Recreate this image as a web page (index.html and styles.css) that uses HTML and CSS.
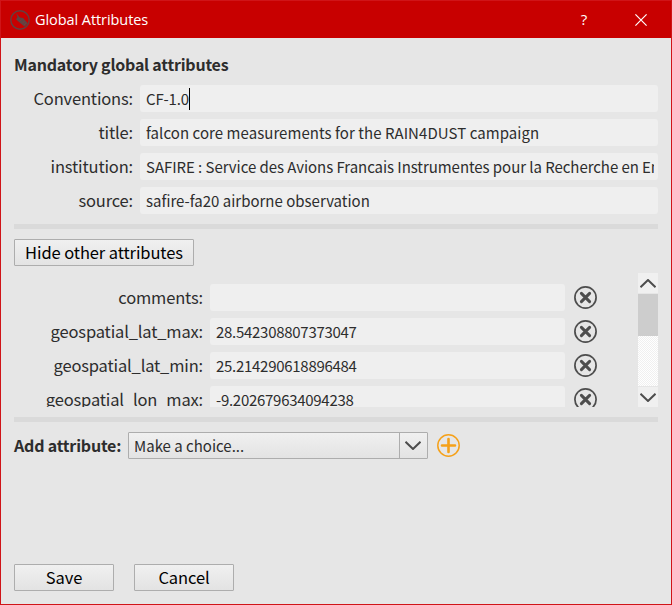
FILE: index.html
```html
<!DOCTYPE html>
<html lang="en">
<head>
<meta charset="utf-8">
<title>Global Attributes</title>
<link rel="stylesheet" href="styles.css">
</head>
<body>
<svg class="defs" width="0" height="0" aria-hidden="true">
  <symbol id="remove" viewBox="0 0 24 24"><circle cx="12.500" cy="12.500" r="10.600" fill="none" stroke="#4d4d4d" stroke-width="1.700"/><path d="M8.400 8.400l8.200 8.200M16.600 8.400l-8.200 8.200" stroke="#4d4d4d" stroke-width="3" stroke-linecap="round"/></symbol>
</svg>
<div class="window">
  <header class="titlebar">
    <svg class="logo" width="20" height="20" viewBox="0 0 20 20"><circle cx="10" cy="10" r="9.2" fill="none" stroke="#63403f" stroke-width="1.4"/><path d="M6.3 3.200l3.500 4.300 3.200.5 4.800 5.200-3.300 3.300-5.500-4.500-3-2.800 1.500-2z" fill="#5c4544"/><path d="M9.500 11.500l2-2M12 13.500l2.500-2.500M14 15l2-2" stroke="#963030" stroke-width=".6"/></svg>
    <h1>Global Attributes</h1>
    <span class="help">?</span>
    <svg class="close" width="12" height="12" viewBox="0 0 12 12"><path d="M.4.4l11.2 11.2M11.6.4L.4 11.6" stroke="#fff" stroke-width="1.2"/></svg>
  </header>
  <main>
    <h2>Mandatory global attributes</h2>
    <div class="form">
      <div class="row"><label>Conventions:</label><div class="field"><span class="text code">CF-1.0</span><i class="caret"></i></div></div>
      <div class="row"><label>title:</label><div class="field"><span class="text wide">falcon core measurements for the RAIN4DUST campaign</span></div></div>
      <div class="row"><label>institution:</label><div class="field"><span class="text long">SAFIRE : Service des Avions Francais Instrumentes pour la Recherche en Environnement</span></div></div>
      <div class="row"><label>source:</label><div class="field"><span class="text">safire-fa20 airborne observation</span></div></div>
    </div>
    <div class="separator"></div>
    <button class="toggle">Hide other attributes</button>
    <section class="scroll">
      <div class="list">
        <div class="row"><label>comments:</label><div class="field"></div><svg class="icon"><use href="#remove"/></svg></div>
        <div class="row"><label>geospatial_lat_max:</label><div class="field"><span class="text number">28.542308807373047</span></div><svg class="icon"><use href="#remove"/></svg></div>
        <div class="row"><label>geospatial_lat_min:</label><div class="field"><span class="text number">25.214290618896484</span></div><svg class="icon"><use href="#remove"/></svg></div>
        <div class="row"><label>geospatial_lon_max:</label><div class="field"><span class="text number">-9.202679634094238</span></div><svg class="icon"><use href="#remove"/></svg></div>
      </div>
      <div class="scrollbar">
        <div class="arrow"><svg width="16" height="9" viewBox="0 0 16 9"><path d="M.5 8.2l7.500-7.200 7.500 7.200"/></svg></div>
        <div class="track"><div class="thumb"></div></div>
        <div class="arrow"><svg width="16" height="9" viewBox="0 0 16 9"><path d="M.5 .8l7.500 7.200 7.500-7.200"/></svg></div>
      </div>
    </section>
    <div class="separator"></div>
    <div class="add">
      <b>Add attribute:</b>
      <div class="combo"><span>Make a choice...</span><div class="drop"><svg width="16" height="9" viewBox="0 0 16 9"><path d="M.5 .8l7.500 7.200 7.500-7.200"/></svg></div></div>
      <svg class="plus" width="24" height="24" viewBox="0 0 24 24"><circle cx="12.500" cy="11.500" r="10.700" fill="none" stroke="#f5a11a" stroke-width="1.5"/><path d="M12.500 5v13M6 11.500h13" stroke="#f5a11a" stroke-width="2.600" stroke-linecap="round"/></svg>
    </div>
    <footer><button>Save</button><button>Cancel</button></footer>
  </main>
</div>
</body>
</html>
```
FILE: styles.css
```css
* { box-sizing: border-box; }
body { margin: 0; font-family: "Noto Sans CJK SC", "Noto Sans", sans-serif; color: #2d2d2d; }
.defs { position: absolute; }
.window { width: 672px; height: 605px; border: 1px solid #d01418; background: #e6e6e6; display: flex; flex-direction: column; overflow: hidden; }
.titlebar { height: 37px; flex: none; background: #c80000; display: flex; align-items: center; padding-left: 9px; color: #fff; font-family: "Open Sans", sans-serif; }
.titlebar h1 { margin: 0 0 0 5px; font-size: 14.500px; font-weight: 400; line-height: 20px; letter-spacing: -.07px; }
.help { margin: -2px 0 0 auto; width: 10px; text-align: center; font-size: 15px; line-height: 20px; }
.close { margin: 0 24px 0 46px; }
main { flex: 1; padding: 14px 13px 13px; display: flex; flex-direction: column; }
h2 { margin: 0 0 7px; height: 26px; line-height: 25px; font-size: 16px; letter-spacing: -.22px; white-space: nowrap; }
h2, b { font-weight: 700; }
.form, .list { display: flex; flex-direction: column; gap: 7px; }
.row { display: flex; height: 27px; flex: none; }
label { width: 119px; margin-right: 7px; text-align: right; font-size: 16.500px; letter-spacing: -.16px; line-height: 27px; white-space: nowrap; flex: none; }
.field { flex: 1; min-width: 0; height: 27px; background: #efefef; border-radius: 3px; padding: 0 4px 0 6px; display: flex; align-items: center; }
.text { font-size: 15px; line-height: 27px; white-space: nowrap; overflow: hidden; }
.code { letter-spacing: -.15px; }
.wide { letter-spacing: .06px; }
.long { letter-spacing: -.055px; }
.number { letter-spacing: -.28px; }
.caret { width: 1px; height: 22px; background: #000; flex: none; }
.separator { height: 5px; margin-top: 10px; background: #dadada; flex: none; }
button { font-family: inherit; font-size: 16.500px; letter-spacing: -.1px; line-height: 25px; height: 27px; padding: 0; color: #000; border: 1px solid #adadad; border-radius: 1px; background: linear-gradient(#f0f0f0, #e3e3e3); width: 100px; white-space: nowrap; }
.toggle { width: 180px; margin-top: 10px; flex: none; }
.scroll { height: 134px; margin-top: 7px; display: flex; justify-content: space-between; overflow: hidden; flex: none; }
.list { width: 583px; padding-top: 11px; }
.list label { width: 189px; }
.icon { width: 24px; height: 24px; margin: 1px 0 0 8px; flex: none; overflow: visible; }
.scrollbar { width: 20px; display: flex; flex-direction: column; gap: 1px; }
.arrow { height: 20px; background: #f0f0f0; display: flex; align-items: center; justify-content: center; flex: none; }
.arrow path, .drop path { fill: none; stroke: #4d4d4d; stroke-width: 2; }
.track { flex: 1; background: repeating-conic-gradient(#fff 0 25%, #f0f0f0 0 50%) 0 0 / 2px 2px; }
.thumb { height: 42px; background: #cdcdcd; }
.add { display: flex; margin-top: 10px; height: 27px; }
.add b { width: 114px; font-size: 16px; letter-spacing: -.2px; line-height: 27px; white-space: nowrap; }
.combo { width: 300px; border: 1px solid #adadad; border-radius: 1px; background: linear-gradient(#f0f0f0, #e3e3e3); display: flex; justify-content: space-between; font-size: 15px; line-height: 26px; padding-left: 5px; }
.drop { width: 28px; padding-right: 1px; border-left: 1px solid #adadad; display: flex; align-items: center; justify-content: center; }
.plus { margin: 2px 0 0 8px; }
footer { margin-top: auto; display: flex; gap: 20px; }
```
